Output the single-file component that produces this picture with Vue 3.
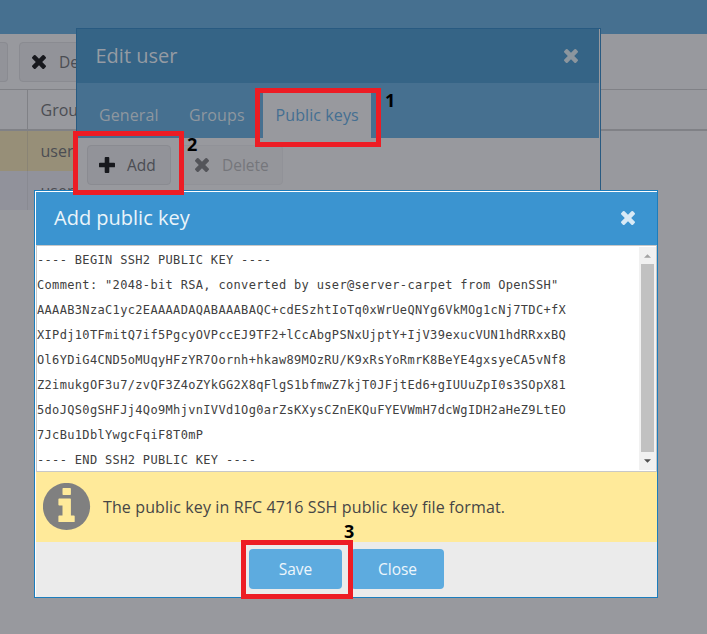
<script setup>
const keyText = [
  '---- BEGIN SSH2 PUBLIC KEY ----',
  'Comment: "2048-bit RSA, converted by user@server-carpet from OpenSSH"',
  'AAAAB3NzaC1yc2EAAAADAQABAAABAQC+cdESzhtIoTq0xWrUeQNYg6VkMOg1cNj7TDC+fX',
  'XIPdj10TFmitQ7if5PgcyOVPccEJ9TF2+lCcAbgPSNxUjptY+IjV39exucVUN1hdRRxxBQ',
  'Ol6YDiG4CND5oMUqyHFzYR7Oornh+hkaw89MOzRU/K9xRsYoRmrK8BeYE4gxsyeCA5vNf8',
  'Z2imukgOF3u7/zvQF3Z4oZYkGG2X8qFlgS1bfmwZ7kjT0JFjtEd6+gIUUuZpI0s3SOpX81',
  '5doJQS0gSHFJj4Qo9MhjvnIVVd1Og0arZsKXysCZnEKQuFYEVWmH7dcWgIDH2aHeZ9LtEO',
  '7JcBu1DblYwgcFqiF8T0mP',
  '---- END SSH2 PUBLIC KEY ----',
].join('\n')
const timesPath =
  'M1298 214q0-40-28-68l-136-136q-28-28-68-28t-68 28L704 304 410 10q-28-28-68-28t-68 28L138 146q-28 28-28 68t28 68l294 294-294 294q-28 28-28 68t28 68l136 136q28 28 68 28t68-28l294-294 294 294q28 28 68 28t68-28l136-136q28-28 28-68t-28-68L976 576l294-294q28-28 28-68z'
</script>

<template>
  <div class="screen">
    <div class="topbar"></div>
    <div class="toolbar">
      <div class="btn stub"></div>
      <div class="btn">
        <svg class="times" viewBox="110 -18 1188 1188"><path :d="timesPath" /></svg>
        <span class="clip">Delete</span>
      </div>
    </div>
    <div class="grid-head"><div class="lead"></div><div class="cell">Groups</div></div>
    <div class="row selected"><div class="lead"></div><div class="cell">user</div></div>
    <div class="row alt"><div class="lead"></div><div class="cell">user</div></div>

    <section class="edit">
      <header class="edit-head">
        <span>Edit user</span>
        <svg class="close" viewBox="110 -18 1188 1188"><path :d="timesPath" /></svg>
      </header>
      <nav class="tabs">
        <span class="tab general">General</span>
        <span class="tab groups">Groups</span>
        <span class="tab active">Public keys</span>
      </nav>
      <div class="actions">
        <div class="btn add">
          <svg class="plus" viewBox="0 0 16 16"><path d="M6.6 0h2.8q.9 0 .9.9v4.8h4.8q.9 0 .9.9v2.8q0 .9-.9.9h-4.8v4.8q0 .9-.9.9H6.6q-.9 0-.9-.9v-4.8H.9Q0 10.300 0 9.400V6.600q0-.9.9-.9h4.800V.9q0-.9.9-.9z" /></svg>
          <span>Add</span>
        </div>
        <div class="btn disabled">
          <svg class="times" viewBox="110 -18 1188 1188"><path :d="timesPath" /></svg>
          <span>Delete</span>
        </div>
      </div>
    </section>

    <section class="modal">
      <header class="modal-head">
        <span>Add public key</span>
        <svg class="close" viewBox="110 -18 1188 1188"><path :d="timesPath" /></svg>
      </header>
      <div class="field">
        <pre class="key">{{ keyText }}</pre>
        <div class="scroll">
          <svg class="arrow up" viewBox="0 0 8 4"><path d="M0 4L4 0l4 4z" /></svg>
          <div class="thumb"></div>
          <svg class="arrow" viewBox="0 0 8 4"><path d="M0 0h8L4 4z" /></svg>
        </div>
      </div>
      <div class="info">
        <svg class="info-icon" viewBox="0 0 48 48">
          <circle cx="23.500" cy="23.500" r="23.600" fill="#808080" />
          <path fill="#ffea9a" d="M20.200 5h7q.7 0 .7.700v5.600q0 .7-.7.700h-7q-.7 0-.7-.7V5.700q0-.7.7-.7zM16.200 15.500h11q.7 0 .7.700V32.500h3q.8 0 .8.700v5.200q0 .7-.8.700H16.200q-.8 0-.8-.7v-5.200q0-.7.800-.7h3.300V22.500h-3.300q-.8 0-.8-.7v-5.600q0-.7.800-.7z" />
        </svg>
        <span>The public key in RFC 4716 SSH public key file format.</span>
      </div>
      <footer class="foot">
        <button class="primary">Save</button>
        <button class="primary">Close</button>
      </footer>
    </section>

    <div class="mark mark1"></div><b class="num num1">1</b>
    <div class="mark mark2"></div><b class="num num2">2</b>
    <div class="mark mark3"></div><b class="num num3">3</b>
  </div>
</template>

<style>
body { margin: 0; }
</style>

<style scoped>
* { box-sizing: border-box; }
.screen {
  position: relative;
  width: 707px;
  height: 634px;
  overflow: hidden;
  background: #98999e;
  color: #4b4d53;
  font: 16px/24px "Open Sans", sans-serif;
}
.topbar { height: 34px; background: #467090; }
.toolbar { display: flex; gap: 11px; height: 55px; padding-top: 8px; }
.btn {
  display: flex;
  align-items: center;
  height: 40px;
  border: 1px solid #8a8b91;
  border-radius: 4px;
  background: #929399;
  font-size: 15.500px;
}
.toolbar .btn { width: 120px; padding-left: 12px; gap: 13px; }
.toolbar .stub { width: 8px; padding: 0; border-left: 0; border-radius: 0 4px 4px 0; }
.clip { width: 18px; overflow: hidden; }
.times { width: 14px; height: 14px; fill: #17181d; flex: none; }
.grid-head {
  display: flex;
  height: 42px;
  border-top: 1px solid #808186;
  border-bottom: 2px solid #808186;
}
.lead { flex: none; width: 28px; border-right: 1px solid #808186; }
.cell { padding-left: 12.500px; display: flex; align-items: center; }
.row { display: flex; height: 39px; width: 77px; }
.row .lead { border-color: #8a8475; }
.row.selected { height: 40px; background: #978f78; }
.row.alt { background: #91929b; }
.row.alt .lead { border-color: #898a92; }

.edit {
  position: absolute;
  left: 76px;
  top: 28px;
  width: 525px;
  height: 300px;
  background: #98999e;
  border: 1px solid #285a81;
}
.edit-head {
  display: flex;
  align-items: center;
  justify-content: space-between;
  height: 54px;
  margin-right: 1px;
  padding: 0 21px 0 18.500px;
  background: #356486;
  color: #959ba3;
  font-size: 20px;
}
.close { width: 14px; height: 14px; fill: #8c969e; }
.tabs {
  display: flex;
  height: 55px;
  margin-right: 1px;
  padding: 10px 0 0 22px;
  background: #467090;
  color: #8e979f;
  letter-spacing: 0.1px;
}
.tab { height: 45px; line-height: 44px; white-space: nowrap; }
.general { width: 90px; }
.groups { width: 74px; }
.active { width: 108px; padding-left: 12.500px; background: #98999e; color: #446f92; }
.actions { display: flex; gap: 9px; padding: 7px 10px; }
.add { width: 84px; padding-left: 11px; gap: 12px; }
.plus { width: 16px; height: 16px; fill: #17181d; }
.disabled { width: 103px; padding-left: 14px; gap: 13px; color: #75767b; background: #95969b; border-color: #919298; }
.disabled .times { fill: #54555a; }

.modal {
  position: absolute;
  left: 34px;
  top: 190px;
  width: 624px;
  height: 408px;
  padding: 1px 0 0 1px;
  border: 1px solid #1b7dbd;
  background: #fff;
}
.modal-head {
  display: flex;
  align-items: center;
  justify-content: space-between;
  height: 53px;
  padding: 0 22px 2px 18px;
  background: #3b94d0;
  color: #eaf4fa;
  font-size: 20px;
}
.modal-head .close { fill: #d8eaf6; }
.field {
  display: flex;
  justify-content: space-between;
  height: 227px;
  padding: 1px 0;
  border: 1px solid #c8c8c8;
}
.key {
  margin: 0;
  padding-top: 1px;
  height: 223px;
  overflow: hidden;
  color: #404040;
  font: 12px/25px "DejaVu Sans Mono", monospace;
  letter-spacing: 0.335px;
}
.scroll {
  display: flex;
  flex-direction: column;
  align-items: center;
  justify-content: space-between;
  width: 17px;
  padding: 7px 0;
  background: #f1f1f1;
}
.arrow { width: 7px; height: 4px; fill: #505050; }
.up { fill: #a3a3a3; }
.thumb { width: 13px; height: 188px; margin-top: -2px; background: #c1c1c1; }
.info {
  display: flex;
  align-items: center;
  gap: 12px;
  height: 70px;
  padding-left: 7px;
  background: #ffea9a;
  color: #464646;
  letter-spacing: 0.115px;
}
.info-icon { width: 48px; height: 48px; }
.foot { display: flex; justify-content: center; gap: 9px; height: 55px; padding-top: 7px; background: #ebebeb; }
.primary {
  width: 93px;
  height: 40px;
  padding: 0;
  border: 0;
  border-radius: 4px;
  background: #5dabdf;
  color: #edf6fc;
  font: 15.500px/24px "Open Sans", sans-serif;
}

.mark { position: absolute; border: 5px solid #ed1c24; }
.mark1 { left: 255px; top: 88px; width: 126px; height: 59px; }
.mark2 { left: 73px; top: 131px; width: 111px; height: 64px; }
.mark3 { left: 241px; top: 540px; width: 112px; height: 59px; }
.num { position: absolute; color: #000; font: 700 18px/20px "Open Sans", sans-serif; }
.num1 { left: 385px; top: 90px; }
.num2 { left: 187px; top: 134px; }
.num3 { left: 344px; top: 521px; }
</style>
